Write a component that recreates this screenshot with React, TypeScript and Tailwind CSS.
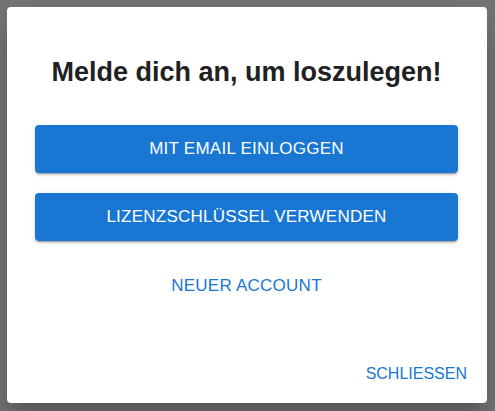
export default function App() {
  return (
    <div className="flex h-[411px] w-[495px] bg-[#737373] pb-[8px] pl-[7px] pr-[8px] pt-[7px] font-['Liberation_Sans',Arial,sans-serif]">
      <div className="flex flex-1 flex-col rounded-[4px] bg-white shadow-[0_11px_15px_-7px_rgba(0,0,0,0.2),0_24px_38px_3px_rgba(0,0,0,0.14)]">
        <div className="flex flex-col pl-[28px] pr-[29px] pt-[49px]">
          <h1 className="text-center text-[27px] font-bold leading-[32px] text-[#212121]">Melde dich an, um loszulegen!</h1>
          <div className="mt-[37px] flex flex-col gap-[20px]">
            <button className="h-[48px] rounded-[4px] bg-[#1976d2] text-[17px] tracking-[0.25px] text-white shadow-[0_3px_1px_-2px_rgba(0,0,0,0.2),0_2px_2px_0_rgba(0,0,0,0.14),0_1px_5px_0_rgba(0,0,0,0.12)]">
              MIT EMAIL EINLOGGEN
            </button>
            <button className="h-[48px] rounded-[4px] bg-[#1976d2] text-[17px] tracking-[0.25px] text-white shadow-[0_3px_1px_-2px_rgba(0,0,0,0.2),0_2px_2px_0_rgba(0,0,0,0.14),0_1px_5px_0_rgba(0,0,0,0.12)]">
              LIZENZSCHLÜSSEL VERWENDEN
            </button>
          </div>
          <button className="mx-auto mt-[29px] h-[32px] px-2 text-[17px] tracking-[0.25px] text-[#1976d2]">NEUER ACCOUNT</button>
        </div>
        <div className="mt-auto flex justify-end px-[12px] pb-[13px]">
          <button className="h-[32px] px-[8px] text-[16px] text-[#1976d2]">SCHLIESSEN</button>
        </div>
      </div>
    </div>
  );
}
